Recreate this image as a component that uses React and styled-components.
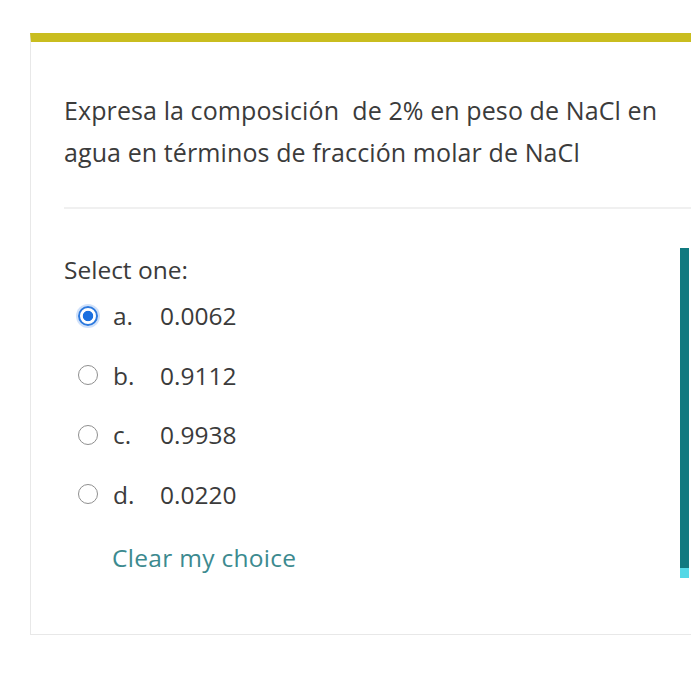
import React from "react";
import styled, { createGlobalStyle } from "styled-components";

const Global = createGlobalStyle`
  html, body { margin: 0; padding: 0; background: #ffffff; }
  body { font-family: "Open Sans", "Noto Sans", sans-serif; color: #3a3a3a; }
`;

const Viewport = styled.div`
  width: 691px;
  height: 700px;
  overflow: hidden;
  padding: 33px 0 0 30px;
  box-sizing: border-box;
`;

const Card = styled.div`
  width: 700px;
  border-top: 9px solid #c9bd1f;
  border-left: 1px solid #e8e8e8;
  border-bottom: 1px solid #e8e8e8;
  box-sizing: border-box;
  height: 602px;
  display: flex;
  flex-direction: column;
`;

const Question = styled.div`
  padding: 47px 0 0 33px;
  font-size: 25px;
  line-height: 42px;
  color: #3b3b3b;
  letter-spacing: 0.1px;
  white-space: pre-wrap;
`;

const Divider = styled.div`
  margin: 34px 0 0 33px;
  height: 2px;
  background: #f0f0f0;
`;

const AnswerArea = styled.div`
  display: flex;
  margin-top: 39px;
`;

const Answers = styled.div`
  width: 649px;
  padding-left: 33px;
  box-sizing: border-box;
`;

const Prompt = styled.div`
  font-size: 24.5px;
  line-height: 32px;
  margin-top: 6px;
  color: #3b3b3b;
`;

const OptionList = styled.div`
  display: flex;
  flex-direction: column;
`;

const Option = styled.label`
  display: flex;
  align-items: center;
  height: 59.5px;
  font-size: 24.5px;
  color: #3b3b3b;
`;

const Radio = styled.span`
  width: 20px;
  height: 20px;
  margin-left: 14px;
  border-radius: 50%;
  box-sizing: border-box;
  flex: none;
  border: ${(p) => (p.$checked ? "2px solid #2c79de" : "1.5px solid #8f8f8f")};
  box-shadow: ${(p) => (p.$checked ? "0 0 0 2px rgba(120,170,240,0.35)" : "none")};
  background: ${(p) =>
    p.$checked ? "radial-gradient(circle, #1a6fe0 0 4.8px, #ffffff 5.6px)" : "#fff"};
`;

const Letter = styled.span`
  width: 47px;
  margin-left: 15px;
`;

const Value = styled.span``;

const Clear = styled.a`
  display: block;
  margin: 17px 0 0 48px;
  font-size: 24.5px;
  line-height: 34px;
  letter-spacing: 0.3px;
  color: #3c8a8f;
  text-decoration: none;
`;

const SideBar = styled.div`
  width: 9px;
  height: 330px;
  background: linear-gradient(#117a80 0 97%, #55d8e6 97%);
  flex: none;
`;

const options = [
  { l: "a.", v: "0.0062", checked: true },
  { l: "b.", v: "0.9112" },
  { l: "c.", v: "0.9938" },
  { l: "d.", v: "0.0220" },
];

export default function App() {
  return (
    <>
      <Global />
      <Viewport>
        <Card>
          <Question>
            {"Expresa la composición  de 2% en peso de NaCl en\nagua en términos de fracción molar de NaCl"}
          </Question>
          <Divider />
          <AnswerArea>
            <Answers>
              <Prompt>Select one:</Prompt>
              <OptionList>
                {options.map((o) => (
                  <Option key={o.l}>
                    <Radio $checked={o.checked} />
                    <Letter>{o.l}</Letter>
                    <Value>{o.v}</Value>
                  </Option>
                ))}
              </OptionList>
              <Clear href="#">Clear my choice</Clear>
            </Answers>
            <SideBar />
          </AnswerArea>
        </Card>
      </Viewport>
    </>
  );
}
